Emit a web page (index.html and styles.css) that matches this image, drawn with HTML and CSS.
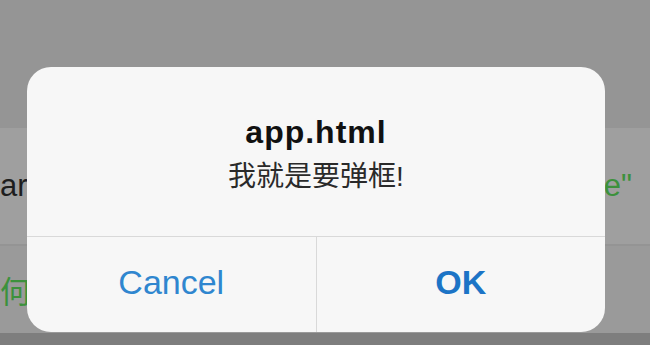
FILE: index.html
```html
<!DOCTYPE html>
<html lang="zh-CN">
<head>
    <meta charset="UTF-8">
    <meta name="viewport" content="width=device-width, initial-scale=1.0">
    <title>app.html</title>
    <link rel="stylesheet" href="styles.css">
</head>
<body>
    <div class="screen">
        <div class="top"></div>
        <div class="row row-light">
            <span class="code">ard</span>
            <span class="str">e"</span>
        </div>
        <div class="row row-dark">
            <span class="str">何，</span>
        </div>
        <div class="bottom"></div>

        <div class="alert">
            <div class="alert-body">
                <div class="alert-title">app.html</div>
                <div class="alert-msg">我就是要弹框!</div>
            </div>
            <div class="alert-btns">
                <a class="btn">Cancel</a>
                <a class="btn btn-ok">OK</a>
            </div>
        </div>
    </div>
</body>
</html>
```

FILE: styles.css
```css
*{
    margin: 0;
    padding: 0;
}
body{
    width: 650px;
    height: 345px;
    overflow: hidden;
    background-color: #969696;
    font-family: "Liberation Sans", "Noto Sans CJK SC", sans-serif;
}
.screen{
    position: relative;
    height: 345px;
    display: flex;
    flex-direction: column;
}
.top{
    height: 128px;
    background-color: #959595;
}
.row{
    display: flex;
    justify-content: space-between;
    align-items: center;
    font-size: 31px;
}
.row-light{
    height: 116px;
    background-color: #9f9f9f;
    border-bottom: 2px solid #949494;
    padding-right: 18px;
}
.row-dark{
    height: 87px;
    background-color: #9a9a9a;
}
.code{
    color: #1e1e1e;
}
.str{
    color: #3c913c;
}
.bottom{
    flex: 1;
    background-color: #7e7e7e;
}
.alert{
    position: absolute;
    left: 27px;
    top: 67px;
    width: 578px;
    height: 265px;
    background-color: #f7f7f7;
    border-radius: 24px;
    display: flex;
    flex-direction: column;
    overflow: hidden;
}
.alert-body{
    height: 170px;
    border-bottom: 1px solid #d9d9d9;
    text-align: center;
    padding-top: 47px;
    box-sizing: border-box;
}
.alert-title{
    font-size: 32px;
    font-weight: bold;
    line-height: 36px;
    letter-spacing: 1px;
    color: #111;
}
.alert-msg{
    margin-top: 10px;
    font-size: 28px;
    line-height: 34px;
    color: #2a2a2a;
}
.alert-btns{
    flex: 1;
    display: flex;
}
.btn{
    flex: 1;
    display: flex;
    align-items: center;
    justify-content: center;
    font-size: 34px;
    color: #2f86cf;
    padding-bottom: 4px;
}
.btn + .btn{
    border-left: 1px solid #d9d9d9;
}
.btn-ok{
    font-weight: bold;
    color: #1c74c6;
}
```
